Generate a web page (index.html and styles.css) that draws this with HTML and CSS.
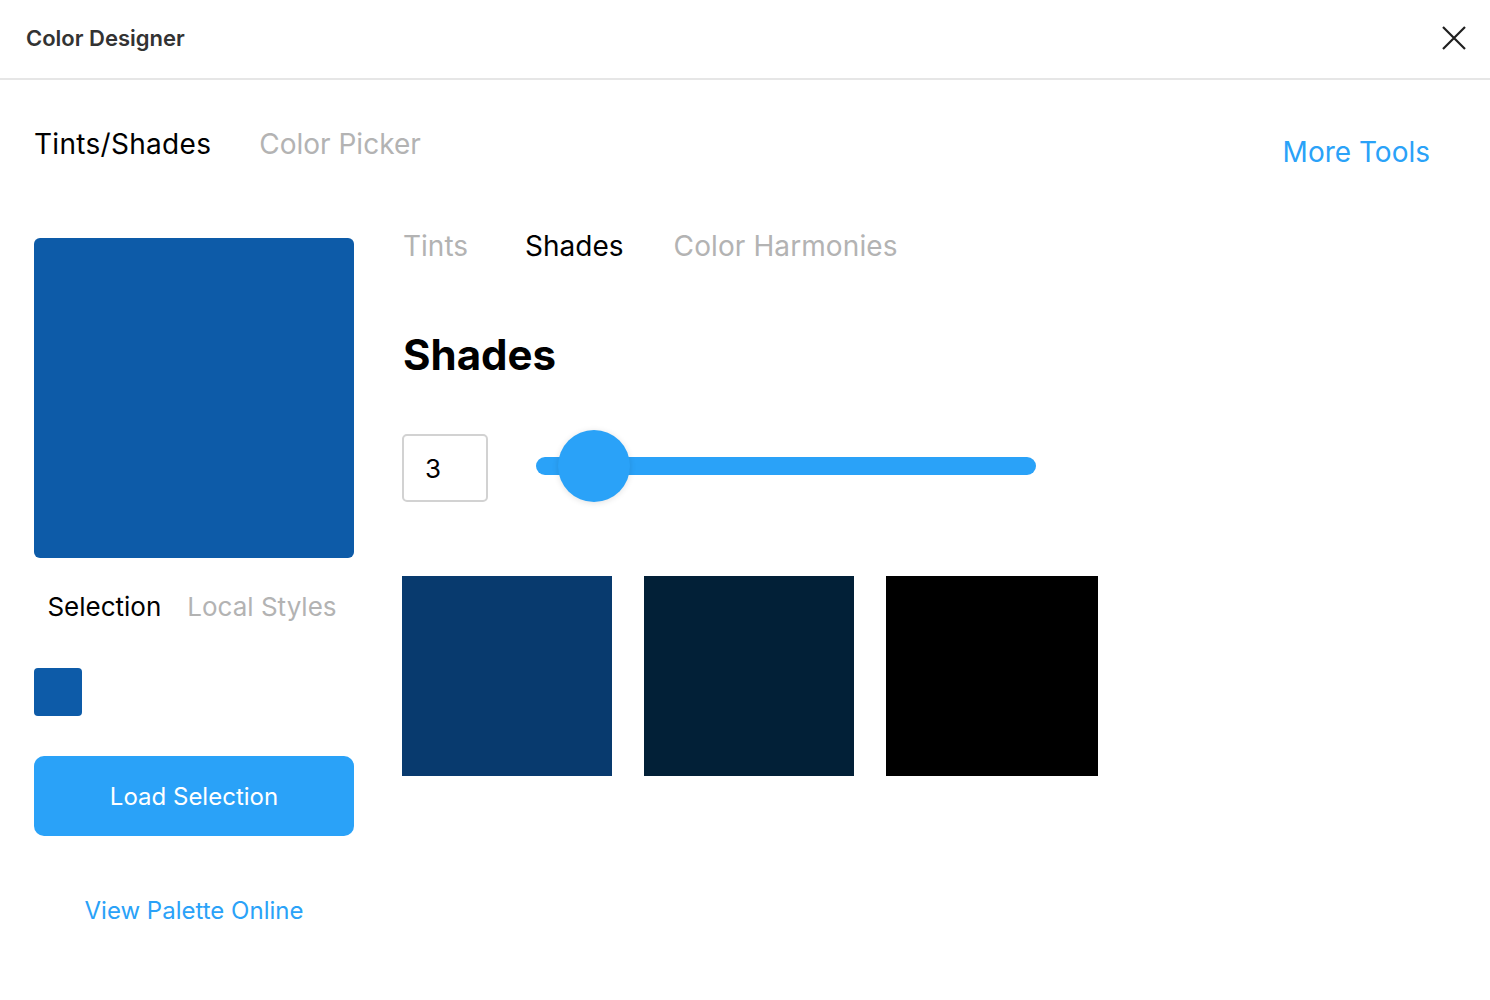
FILE: index.html
```html
<!DOCTYPE html>
<html>
<head>
<meta charset="utf-8">
<link rel="stylesheet" href="styles.css">
</head>
<body>
<header class="header">
  <div class="title">Color Designer</div>
  <button class="close" aria-label="Close">
    <svg width="26" height="26" viewBox="0 0 26 26"><path d="M2 2 L24 24 M24 2 L2 24" stroke="#1f1f1f" stroke-width="2.2" fill="none"/></svg>
  </button>
</header>
<div class="topbar">
  <div class="tabs">
    <span class="tab active">Tints/Shades</span>
    <span class="tab">Color Picker</span>
  </div>
  <a class="more">More Tools</a>
</div>
<main class="main">
  <section class="left">
    <div class="big-swatch"></div>
    <div class="src-tabs">
      <span class="src active">Selection</span>
      <span class="src">Local Styles</span>
    </div>
    <div class="mini-swatches"><div class="mini"></div></div>
    <button class="load">Load Selection</button>
    <a class="view">View Palette Online</a>
  </section>
  <section class="right">
    <div class="subtabs">
      <span class="sub sub-tints">Tints</span>
      <span class="sub sub-shades active">Shades</span>
      <span class="sub sub-harm">Color Harmonies</span>
    </div>
    <h1 class="heading">Shades</h1>
    <div class="controls">
      <div class="count">3</div>
      <div class="slider"><div class="thumb"></div></div>
    </div>
    <div class="swatches">
      <div class="sw" style="background:#083a6e"></div>
      <div class="sw" style="background:#022037"></div>
      <div class="sw" style="background:#000000"></div>
    </div>
  </section>
</main>
</body>
</html>
```

FILE: styles.css
```css
* { box-sizing: border-box; }
html, body { margin: 0; padding: 0; background: #fff; }
body {
  font-family: Inter, "Noto Sans", sans-serif;
  color: #000;
  width: 1490px;
  height: 1000px;
  overflow: hidden;
}
.header {
  height: 80px;
  border-bottom: 2px solid #e6e6e6;
  display: flex;
  align-items: center;
  justify-content: space-between;
  padding: 0 23px 2px 26px;
}
.title {
  font-size: 22px;
  font-weight: 600;
  color: #333;
}
.close {
  border: 0;
  background: none;
  padding: 0;
  width: 26px;
  height: 26px;
  display: flex;
}
.topbar {
  display: flex;
  justify-content: space-between;
  align-items: flex-start;
  padding: 47px 60px 0 34px;
}
.tabs { display: flex; gap: 48px; }
.tab { font-size: 28px; color: #b3b3b3; line-height: 34px; }
.tab.active { color: #000; letter-spacing: 0.3px; }
.more {
  font-size: 28px;
  line-height: 34px;
  color: #2aa2f8;
  margin-top: 8px;
}
.main {
  display: flex;
  align-items: flex-start;
  gap: 48px;
  padding: 60px 0 0 34px;
}
.left {
  width: 320px;
  display: flex;
  flex-direction: column;
  padding-top: 9px;
}
.big-swatch {
  width: 320px;
  height: 320px;
  background: #0d5ba8;
  border-radius: 6px;
}
.src-tabs {
  display: flex;
  justify-content: center;
  gap: 26px;
  margin-top: 33px;
  padding-right: 4px;
}
.src { font-size: 26px; line-height: 32px; color: #b3b3b3; }
.src.active { color: #000; }
.mini-swatches { display: flex; margin-top: 45px; }
.mini {
  width: 48px;
  height: 48px;
  border-radius: 4px;
  background: #0d5ba8;
}
.load {
  margin-top: 40px;
  width: 320px;
  height: 80px;
  border: 0;
  border-radius: 10px;
  background: #2aa2f8;
  color: #fff;
  font-family: inherit;
  font-size: 24px;
  padding-top: 2px;
}
.view {
  margin-top: 60px;
  text-align: center;
  font-size: 24px;
  line-height: 29px;
  color: #2aa2f8;
}
.right {
  display: flex;
  flex-direction: column;
  padding-left: 1px;
}
.subtabs { display: flex; }
.sub { font-size: 28px; line-height: 34px; color: #b3b3b3; }
.sub.active { color: #000; }
.sub-tints { margin-right: 57px; }
.sub-shades { margin-right: 50px; }
.sub-harm { letter-spacing: 0.1px; }
.heading {
  margin: 67px 0 0;
  font-size: 42px;
  line-height: 50px;
  font-weight: 700;
}
.controls {
  display: flex;
  align-items: center;
  gap: 48px;
  margin-top: 54px;
  margin-left: -1px;
}
.count {
  width: 86px;
  height: 68px;
  border: 2px solid #d2d2d2;
  border-radius: 5px;
  font-size: 26px;
  display: flex;
  align-items: center;
  padding-left: 21px;
}
.slider {
  position: relative;
  width: 500px;
  height: 18px;
  border-radius: 9px;
  background: #2aa2f8;
  margin-top: -4px;
}
.thumb {
  position: absolute;
  left: 22px;
  top: -27px;
  width: 72px;
  height: 72px;
  border-radius: 50%;
  background: #2aa2f8;
  box-shadow: 0 1px 6px rgba(0,0,0,0.12);
}
.swatches {
  display: flex;
  gap: 32px;
  margin-top: 74px;
  margin-left: -1px;
}
.sw { width: 210px; height: 200px; }
.sw:last-child { width: 212px; }
```
